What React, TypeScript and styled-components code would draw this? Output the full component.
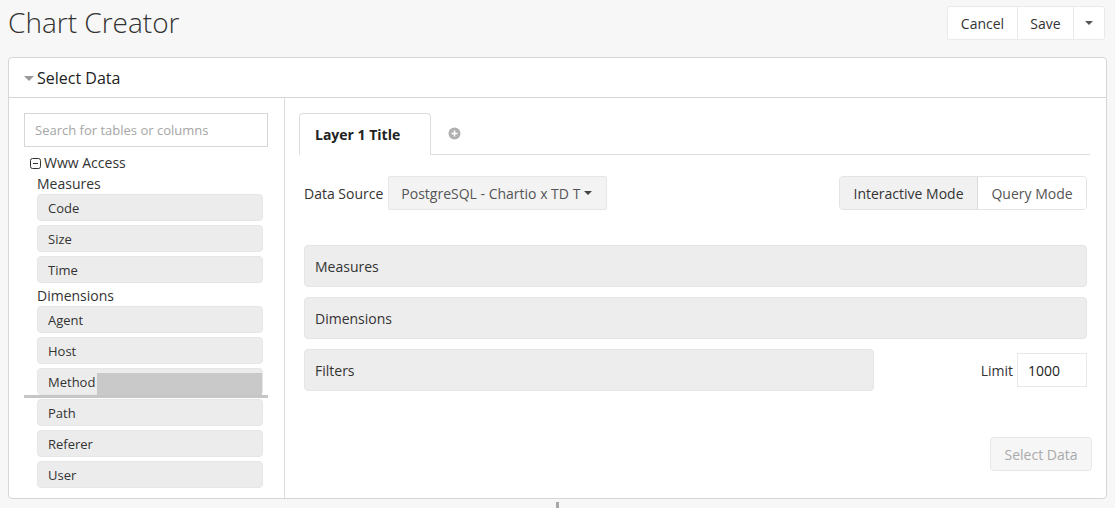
import styled, { createGlobalStyle } from 'styled-components';

const GlobalStyle = createGlobalStyle`
    body {
        margin: 0;
        background: #f7f7f7;
        font-family: "Open Sans", "Liberation Sans", sans-serif;
        color: #333;
    }
    * { box-sizing: border-box; }
`;

// -- PAGE --
const Page = styled.div`
    width: 1115px;
    height: 508px;
    overflow: hidden;
    padding: 0 8px;
`;

const TopBar = styled.div`
    display: flex;
    justify-content: space-between;
    align-items: flex-start;
    height: 57px;
    padding-right: 2px;
`;

const Title = styled.h1`
    margin: 2px 0 0;
    font-size: 28px;
    font-weight: 300;
    line-height: 40px;
    color: #333;
`;

const ButtonGroup = styled.div`
    display: flex;
    margin-top: 6px;
    height: 34px;
    background: #fff;
    border: 1px solid #eaeaea;
    border-radius: 3px;
`;

const GroupButton = styled.div<{ $width: number }>`
    width: ${p => p.$width}px;
    display: flex;
    align-items: center;
    justify-content: center;
    font-size: 14px;
    color: #333;
    & + & { border-left: 1px solid #eaeaea; }
`;

const Caret = styled.span<{ $color?: string }>`
    display: inline-block;
    width: 0;
    height: 0;
    border-left: 4px solid transparent;
    border-right: 4px solid transparent;
    border-top: 4px solid ${p => p.$color || '#555'};
`;

// -- PANEL --
const Panel = styled.div`
    height: 442px;
    background: #fff;
    border: 1px solid #d6d6d6;
    border-radius: 4px;
    display: flex;
    flex-direction: column;
`;

const PanelHeader = styled.div`
    height: 40px;
    display: flex;
    align-items: center;
    gap: 3px;
    padding-left: 15px;
    border-bottom: 1px solid #d6d6d6;
    font-size: 16px;
    color: #222;
`;

const HeaderCaret = styled.span`
    width: 0;
    height: 0;
    border-left: 5px solid transparent;
    border-right: 5px solid transparent;
    border-top: 5px solid #999;
    margin-top: 1px;
`;

const PanelBody = styled.div`
    flex: 1;
    display: flex;
    min-height: 0;
`;

// -- LEFT --
const Sidebar = styled.div`
    width: 276px;
    border-right: 1px solid #dcdcdc;
    padding: 15px 16px 0 15px;
`;

const Search = styled.input`
    width: 244px;
    height: 34px;
    border: 1px solid #d6d6d6;
    padding: 0 10px;
    font-family: inherit;
    font-size: 13px;
    color: #333;
    outline: none;
    &::placeholder { color: #a5a5a5; }
`;

const TableName = styled.div`
    display: flex;
    align-items: center;
    gap: 3px;
    margin: 6px 0 0 6px;
    font-size: 14px;
    line-height: 20px;
`;

const SectionLabel = styled.div`
    margin-left: 13px;
    font-size: 14px;
    line-height: 21px;
`;

const FieldList = styled.div`
    display: flex;
    flex-direction: column;
    gap: 4px;
    margin: 0 0 2px 13px;
    width: 226px;
`;

const Field = styled.div`
    position: relative;
    height: 27px;
    display: flex;
    align-items: center;
    padding-left: 10px;
    background: #ececec;
    border: 1px solid #e6e6e6;
    border-radius: 4px;
    font-size: 13px;
    color: #333;
`;

const DragGhost = styled.span`
    position: absolute;
    left: 59px;
    right: 0;
    top: 4px;
    bottom: -1px;
    background: #c9c9c9;
`;

const DropLine = styled.span`
    position: absolute;
    left: -14px;
    width: 244px;
    bottom: -4px;
    height: 3px;
    background: #c6c6c6;
`;

// -- RIGHT --
const Main = styled.div`
    flex: 1;
    padding: 15px 16px 0 14px;
    display: flex;
    flex-direction: column;
`;

const Tabs = styled.div`
    display: flex;
    align-items: flex-end;
    height: 42px;
    border-bottom: 1px solid #ddd;
`;

const Tab = styled.div`
    width: 132px;
    height: 42px;
    margin-bottom: -1px;
    padding-left: 15px;
    display: flex;
    align-items: center;
    background: #fff;
    border: 1px solid #ddd;
    border-bottom-color: #fff;
    border-radius: 4px 4px 0 0;
    font-size: 14px;
    font-weight: 700;
    color: #222;
`;

const AddTab = styled.div`
    height: 41px;
    display: flex;
    align-items: center;
    padding-left: 17px;
`;

const Form = styled.div`
    padding: 0 3px 0 5px;
    display: flex;
    flex-direction: column;
`;

const SourceRow = styled.div`
    display: flex;
    align-items: center;
    margin-top: 21px;
    height: 34px;
`;

const Label = styled.span`
    font-size: 14px;
    color: #333;
    margin-right: 5px;
`;

const SourceSelect = styled.div`
    width: 219px;
    height: 34px;
    display: flex;
    align-items: center;
    gap: 4px;
    padding-left: 12px;
    background: #f3f3f3;
    border: 1px solid #e6e6e6;
    border-radius: 2px;
    font-size: 14px;
    color: #555;
    white-space: nowrap;
`;

const ModeGroup = styled.div`
    margin-left: auto;
    display: flex;
    height: 34px;
    border: 1px solid #e3e3e3;
    border-radius: 4px;
    overflow: hidden;
`;

const ModeButton = styled.div<{ $active?: boolean; $width: number }>`
    width: ${p => p.$width}px;
    display: flex;
    align-items: center;
    justify-content: center;
    font-size: 14px;
    color: ${p => (p.$active ? '#333' : '#555')};
    background: ${p => (p.$active ? '#f1f1f1' : '#fff')};
    border-right: ${p => (p.$active ? '1px solid #dcdcdc' : 'none')};
`;

const DropZone = styled.div<{ $width?: number }>`
    width: ${p => (p.$width ? `${p.$width}px` : '100%')};
    height: 42px;
    display: flex;
    align-items: center;
    padding-left: 10px;
    background: #ededed;
    border: 1px solid #e6e6e6;
    border-radius: 4px;
    font-size: 14px;
    color: #333;
`;

const Zones = styled.div`
    display: flex;
    flex-direction: column;
    gap: 10px;
    margin-top: 35px;
`;

const FilterRow = styled.div`
    display: flex;
    align-items: center;
`;

const LimitLabel = styled.span`
    margin-left: auto;
    margin-right: 4px;
    font-size: 14px;
    color: #333;
`;

const LimitInput = styled.div`
    width: 70px;
    height: 34px;
    display: flex;
    align-items: center;
    padding-left: 10px;
    border: 1px solid #e8e8e8;
    font-size: 14px;
    color: #222;
`;

const Footer = styled.div`
    display: flex;
    justify-content: flex-end;
    margin: 46px -5px 0 0;
`;

const DisabledButton = styled.div`
    width: 102px;
    height: 34px;
    display: flex;
    align-items: center;
    justify-content: center;
    background: #f6f6f6;
    border: 1px solid #e6e6e6;
    border-radius: 4px;
    font-size: 14px;
    color: #aaa;
`;

const Handle = styled.div`
    display: flex;
    justify-content: center;
    padding-top: 3px;
    &::after {
        content: '';
        width: 3px;
        height: 7px;
        background: #a8a8a8;
    }
`;

const MinusBox = () => (
    <svg width="11" height="11" viewBox="0 0 11 11">
        <rect x="0.5" y="0.5" width="10" height="10" rx="2" fill="none" stroke="#333" />
        <path d="M3 5.5h5" stroke="#333" />
    </svg>
);

const PlusCircle = () => (
    <svg width="13" height="13" viewBox="0 0 13 13">
        <circle cx="6.5" cy="6.5" r="6" fill="#b0b0b0" />
        <path d="M6.5 3.5v6M3.5 6.5h6" stroke="#fff" strokeWidth="1.6" />
    </svg>
);

const measures = ['Code', 'Size', 'Time'];
const dimensions = ['Agent', 'Host', 'Method', 'Path', 'Referer', 'User'];

const App = () => (
    <Page>
        <GlobalStyle />
        <TopBar>
            <Title>Chart Creator</Title>
            <ButtonGroup>
                <GroupButton $width={69}>Cancel</GroupButton>
                <GroupButton $width={56}>Save</GroupButton>
                <GroupButton $width={31}><Caret /></GroupButton>
            </ButtonGroup>
        </TopBar>

        <Panel>
            <PanelHeader>
                <HeaderCaret />
                Select Data
            </PanelHeader>
            <PanelBody>
                <Sidebar>
                    <Search placeholder="Search for tables or columns" />
                    <TableName><MinusBox />Www Access</TableName>
                    <SectionLabel>Measures</SectionLabel>
                    <FieldList>
                        {measures.map(m => <Field key={m}>{m}</Field>)}
                    </FieldList>
                    <SectionLabel>Dimensions</SectionLabel>
                    <FieldList>
                        {dimensions.map(d => (
                            <Field key={d}>
                                {d}
                                {d === 'Method' && <><DragGhost /><DropLine /></>}
                            </Field>
                        ))}
                    </FieldList>
                </Sidebar>

                <Main>
                    <Tabs>
                        <Tab>Layer 1 Title</Tab>
                        <AddTab><PlusCircle /></AddTab>
                    </Tabs>
                    <Form>
                        <SourceRow>
                            <Label>Data Source</Label>
                            <SourceSelect>PostgreSQL - Chartio x TD T <Caret $color="#444" /></SourceSelect>
                            <ModeGroup>
                                <ModeButton $active $width={138}>Interactive Mode</ModeButton>
                                <ModeButton $width={108}>Query Mode</ModeButton>
                            </ModeGroup>
                        </SourceRow>
                        <Zones>
                            <DropZone>Measures</DropZone>
                            <DropZone>Dimensions</DropZone>
                            <FilterRow>
                                <DropZone $width={570}>Filters</DropZone>
                                <LimitLabel>Limit</LimitLabel>
                                <LimitInput>1000</LimitInput>
                            </FilterRow>
                        </Zones>
                        <Footer>
                            <DisabledButton>Select Data</DisabledButton>
                        </Footer>
                    </Form>
                </Main>
            </PanelBody>
        </Panel>
        <Handle />
    </Page>
);

export default App;
